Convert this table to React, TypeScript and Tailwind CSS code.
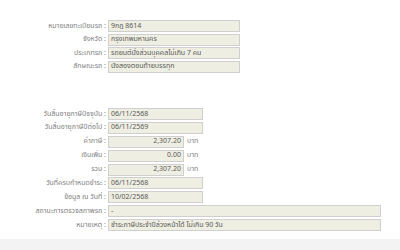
import React from "react";

type Row = { label: string; value: string; width: "top" | "date" | "num" | "long"; unit?: string; right?: boolean };

const top: Row[] = [
  { label: "หมายเลขทะเบียนรถ :", value: "9กฎ 8614", width: "top" },
  { label: "จังหวัด :", value: "กรุงเทพมหานคร", width: "top" },
  { label: "ประเภทรถ :", value: "รถยนต์นั่งส่วนบุคคลไม่เกิน 7 คน", width: "top" },
  { label: "ลักษณะรถ :", value: "นั่งสองตอนท้ายบรรทุก", width: "top" },
];

const bottom: Row[] = [
  { label: "วันสิ้นอายุภาษีปัจจุบัน :", value: "06/11/2568", width: "date" },
  { label: "วันสิ้นอายุภาษีปีต่อไป :", value: "06/11/2569", width: "date" },
  { label: "ค่าภาษี :", value: "2,307.20", width: "num", unit: "บาท", right: true },
  { label: "เงินเพิ่ม :", value: "0.00", width: "num", unit: "บาท", right: true },
  { label: "รวม :", value: "2,307.20", width: "num", unit: "บาท", right: true },
  { label: "วันที่ครบกำหนดชำระ :", value: "06/11/2568", width: "date" },
  { label: "ข้อมูล ณ วันที่ :", value: "10/02/2568", width: "date" },
  { label: "สถานะการตรวจสภาพรถ :", value: "-", width: "long" },
  { label: "หมายเหตุ :", value: "ชำระภาษีประจำปีล่วงหน้าได้ ไม่เกิน 90 วัน", width: "long" },
];

const widthClass: Record<Row["width"], string> = {
  top: "w-[132px]",
  date: "w-[95px]",
  num: "w-[76px]",
  long: "w-[273px]",
};

function FormRow({ r }: { r: Row }) {
  return (
    <div className="flex items-center h-[12px]">
      <div className="w-[108px] shrink-0 text-right pr-[2px] text-[#808080] whitespace-nowrap">{r.label}</div>
      <div
        className={`${widthClass[r.width]} h-[12px] shrink-0 bg-[#eeeee2] border border-[#cfcfcf] px-[2px] flex items-center text-[#5a5a5a] whitespace-nowrap overflow-hidden ${r.right ? "justify-end" : ""}`}
      >
        {r.value}
      </div>
      {r.unit && <div className="ml-[3px] text-[#808080] whitespace-nowrap">{r.unit}</div>}
    </div>
  );
}

export default function App() {
  return (
    <div
      className="w-[400px] h-[250px] bg-white flex flex-col text-[7px] leading-none"
      style={{ fontFamily: "Tahoma, 'Noto Sans Thai', 'Noto Sans', 'DejaVu Sans', sans-serif" }}
    >
      <div className="pt-[20px] flex flex-col gap-[1.5px]">
        {top.map((r) => (
          <FormRow key={r.label} r={r} />
        ))}
      </div>
      <div className="pt-[35.5px] flex flex-col gap-[1.9px]">
        {bottom.map((r) => (
          <FormRow key={r.label} r={r} />
        ))}
      </div>
      <div className="flex-1" />
      <div className="h-[11px] bg-[#f3f3f3]" />
    </div>
  );
}
